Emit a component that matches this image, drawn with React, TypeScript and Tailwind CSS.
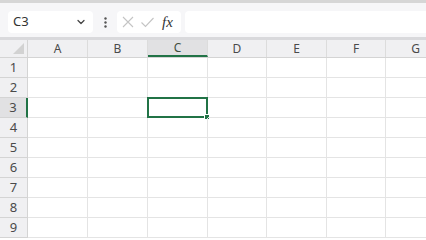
import { ChevronDown } from "lucide-react";

const cols = [
  { name: "A", w: "w-[60px]" },
  { name: "B", w: "w-[60px]" },
  { name: "C", w: "w-[60px]" },
  { name: "D", w: "w-[59px]" },
  { name: "E", w: "w-[60px]" },
  { name: "F", w: "w-[59px]" },
  { name: "G", w: "w-[60px]" },
];

const rows = [1, 2, 3, 4, 5, 6, 7, 8, 9];

export default function App() {
  return (
    <div
      className="w-[426px] h-[240px] overflow-hidden bg-white flex flex-col text-[#4a4a4a]"
      style={{ fontFamily: '"Noto Sans", "Open Sans", sans-serif' }}
    >
      {/* top strip */}
      <div className="h-[3px] shrink-0 bg-[#d6d6d6]" />

      {/* formula bar */}
      <div className="h-[34px] shrink-0 bg-[#f6f6f8] flex items-start pt-[8px] pl-[8px] gap-[4px]">
        <div className="w-[85px] h-[22px] bg-white rounded-[4px] flex items-center justify-between pl-[5px] pr-[6px] text-[13px] text-[#333]">
          <span>C3</span>
          <ChevronDown size={12} strokeWidth={2.5} className="text-[#444]" />
        </div>
        <div className="w-[16px] h-[22px] flex items-center justify-center">
          <svg width="3" height="11" viewBox="0 0 3 11">
            <circle cx="1.5" cy="1.5" r="1.2" fill="#555" />
            <circle cx="1.5" cy="5.5" r="1.2" fill="#555" />
            <circle cx="1.5" cy="9.5" r="1.2" fill="#555" />
          </svg>
        </div>
        <div className="w-[64px] h-[22px] bg-white rounded-[4px] flex items-center pl-[4px] gap-[5px]">
          <svg width="14" height="14" viewBox="0 0 14 14" className="shrink-0">
            <path d="M2 2 L12 12 M12 2 L2 12" stroke="#c4c4c4" strokeWidth="1.1" fill="none" />
          </svg>
          <svg width="15" height="14" viewBox="0 0 15 14" className="shrink-0">
            <path d="M1.5 7.5 L5.5 11.5 L13.5 3" stroke="#c4c4c4" strokeWidth="1.1" fill="none" />
          </svg>
          <span
            className="ml-[2px] text-[15px] italic text-[#333] leading-none"
            style={{ fontFamily: '"Liberation Serif", serif' }}
          >
            fx
          </span>
        </div>
        <div className="flex-1 h-[22px] bg-white rounded-l-[4px]" />
      </div>

      {/* separator */}
      <div className="h-[3px] shrink-0 bg-[#d9d9dc]" />

      {/* column headers */}
      <div className="h-[18px] shrink-0 flex bg-[#f0f0f2] border-b border-[#d4d4d4] text-[12px]">
        <div className="w-[28px] shrink-0 relative border-r border-[#d4d4d4]">
          <svg width="11" height="11" viewBox="0 0 11 11" className="absolute right-[3px] bottom-[3px]">
            <path d="M11 0 L11 11 L0 11 Z" fill="#d2d2d2" />
          </svg>
        </div>
        {cols.map((c) => (
          <div
            key={c.name}
            className={`${c.w} shrink-0 flex items-center justify-center border-r border-[#dcdcdc] ${
              c.name === "C" ? "bg-[#e1e1e3] border-b-2 border-b-[#217346] text-[#3f4f3f]" : ""
            }`}
          >
            {c.name}
          </div>
        ))}
      </div>

      {/* grid */}
      {rows.map((r) => (
        <div key={r} className="h-[20px] shrink-0 flex">
          <div
            className={`w-[28px] shrink-0 flex items-center justify-center text-[13px] border-b border-[#d4d4d4] ${
              r === 3
                ? "bg-[#e1e1e3] border-r-2 border-r-[#217346]"
                : "bg-[#f0f0f2] border-r border-r-[#d4d4d4]"
            }`}
          >
            {r}
          </div>
          {cols.map((c) => (
            <div key={c.name} className={`${c.w} shrink-0 relative border-r border-b border-[#e4e4e4]`}>
              {r === 3 && c.name === "C" && (
                <div className="absolute -left-[1px] -top-[1px] w-[61px] h-[21px] border-2 border-[#217346]">
                  <div className="absolute -right-[4px] -bottom-[4px] w-[6px] h-[6px] bg-[#217346] border border-white" />
                </div>
              )}
            </div>
          ))}
        </div>
      ))}
    </div>
  );
}
